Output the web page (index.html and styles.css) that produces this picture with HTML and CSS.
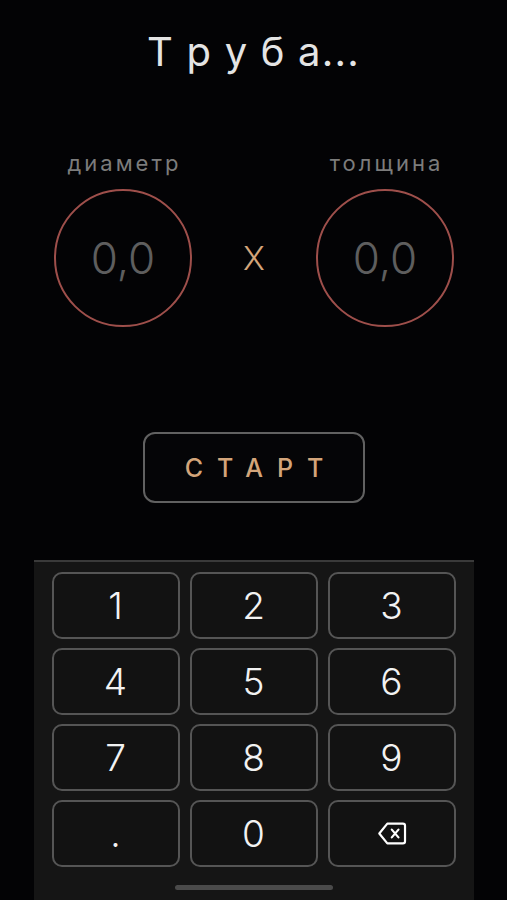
FILE: index.html
```html
<!DOCTYPE html>
<html lang="ru">
<head>
<meta charset="utf-8">
<title>Труба</title>
<link rel="stylesheet" href="styles.css">
</head>
<body>
<div class="screen">
  <h1 class="title">Т р у б а...</h1>

  <div class="inputs">
    <div class="field">
      <div class="label">диаметр</div>
      <div class="circle"><span class="value">0,0</span></div>
    </div>
    <div class="times">X</div>
    <div class="field">
      <div class="label">толщина</div>
      <div class="circle"><span class="value">0,0</span></div>
    </div>
  </div>

  <div class="start-wrap">
    <button class="start"><span>СТАРТ</span></button>
  </div>

  <div class="keyboard">
    <div class="keys">
      <div class="key">1</div>
      <div class="key">2</div>
      <div class="key">3</div>
      <div class="key">4</div>
      <div class="key">5</div>
      <div class="key">6</div>
      <div class="key">7</div>
      <div class="key">8</div>
      <div class="key">9</div>
      <div class="key">.</div>
      <div class="key">0</div>
      <div class="key">
        <svg class="del" width="30" height="25" viewBox="0 0 28 24" fill="none" stroke="#fff" stroke-width="2.1" stroke-linejoin="round" stroke-linecap="round">
          <path d="M9.5 2.5 H24.5 A2 2 0 0 1 26.5 4.5 V19.5 A2 2 0 0 1 24.5 21.5 H9.5 L1.8 12 Z"/>
          <path d="M13.8 8.3 L20.2 15.7 M20.2 8.3 L13.8 15.7"/>
        </svg>
      </div>
    </div>
    <div class="home"></div>
  </div>
</div>
</body>
</html>
```

FILE: styles.css
```css
html, body {
  margin: 0;
  padding: 0;
  background: #030305;
  height: 900px;
  overflow: hidden;
}

.screen {
  width: 507px;
  height: 900px;
  display: flex;
  flex-direction: column;
  font-family: "Inter", "Noto Sans", sans-serif;
}

.title {
  margin: 0;
  padding-top: 28px;
  text-align: center;
  font-size: 40px;
  line-height: 48px;
  font-weight: 400;
  color: #e4e4e4;
  letter-spacing: 1.2px;
  word-spacing: 0;
}

.inputs {
  margin-top: 74px;
  padding-left: 54px;
  display: grid;
  grid-template-columns: 138px 124px 138px;
  align-items: end;
}

.field {
  display: flex;
  flex-direction: column;
  align-items: center;
}

.label {
  font-size: 22px;
  line-height: 26px;
  letter-spacing: 3px;
  margin-right: -3px;
  color: #7c7c7c;
  white-space: nowrap;
}

.circle {
  margin-top: 13px;
  width: 134px;
  height: 134px;
  border: 2px solid #9e4f4b;
  border-radius: 50%;
  display: flex;
  align-items: center;
  justify-content: center;
}

.value {
  font-size: 44px;
  font-weight: 300;
  color: #5e5e5e;
  line-height: 1;
}

.times {
  text-align: center;
  font-size: 33px;
  font-weight: 300;
  color: #d4a57a;
  line-height: 1;
  padding-bottom: 52px;
}

.start-wrap {
  margin-top: 105px;
  display: flex;
  justify-content: center;
  padding-left: 1px;
}

.start {
  width: 222px;
  height: 71px;
  background: #050507;
  border: 2px solid #616161;
  border-radius: 12px;
  display: flex;
  align-items: center;
  justify-content: center;
  font-family: "Inter", "Noto Sans", sans-serif;
  font-size: 25px;
  font-weight: 500;
  color: #d3a57a;
  letter-spacing: 14px;
  padding: 0 0 0 14px;
}

.keyboard {
  margin: 57px auto 0;
  width: 440px;
  flex: 1;
  background: #151515;
  border-top: 2px solid #3a3a3a;
  box-sizing: border-box;
  padding: 10px 18px 0;
  display: flex;
  flex-direction: column;
}

.keys {
  display: grid;
  grid-template-columns: repeat(3, 128px);
  grid-auto-rows: 67px;
  gap: 9px 10px;
}

.key {
  box-sizing: border-box;
  border: 2px solid #555;
  border-radius: 10px;
  background: #121212;
  display: flex;
  align-items: center;
  justify-content: center;
  font-size: 37px;
  font-weight: 300;
  color: #f2f2f2;
  line-height: 1;
}

.del {
  display: block;
}

.home {
  margin: 18px auto 0;
  width: 158px;
  height: 5px;
  border-radius: 3px;
  background: #4a4a4a;
}
```
